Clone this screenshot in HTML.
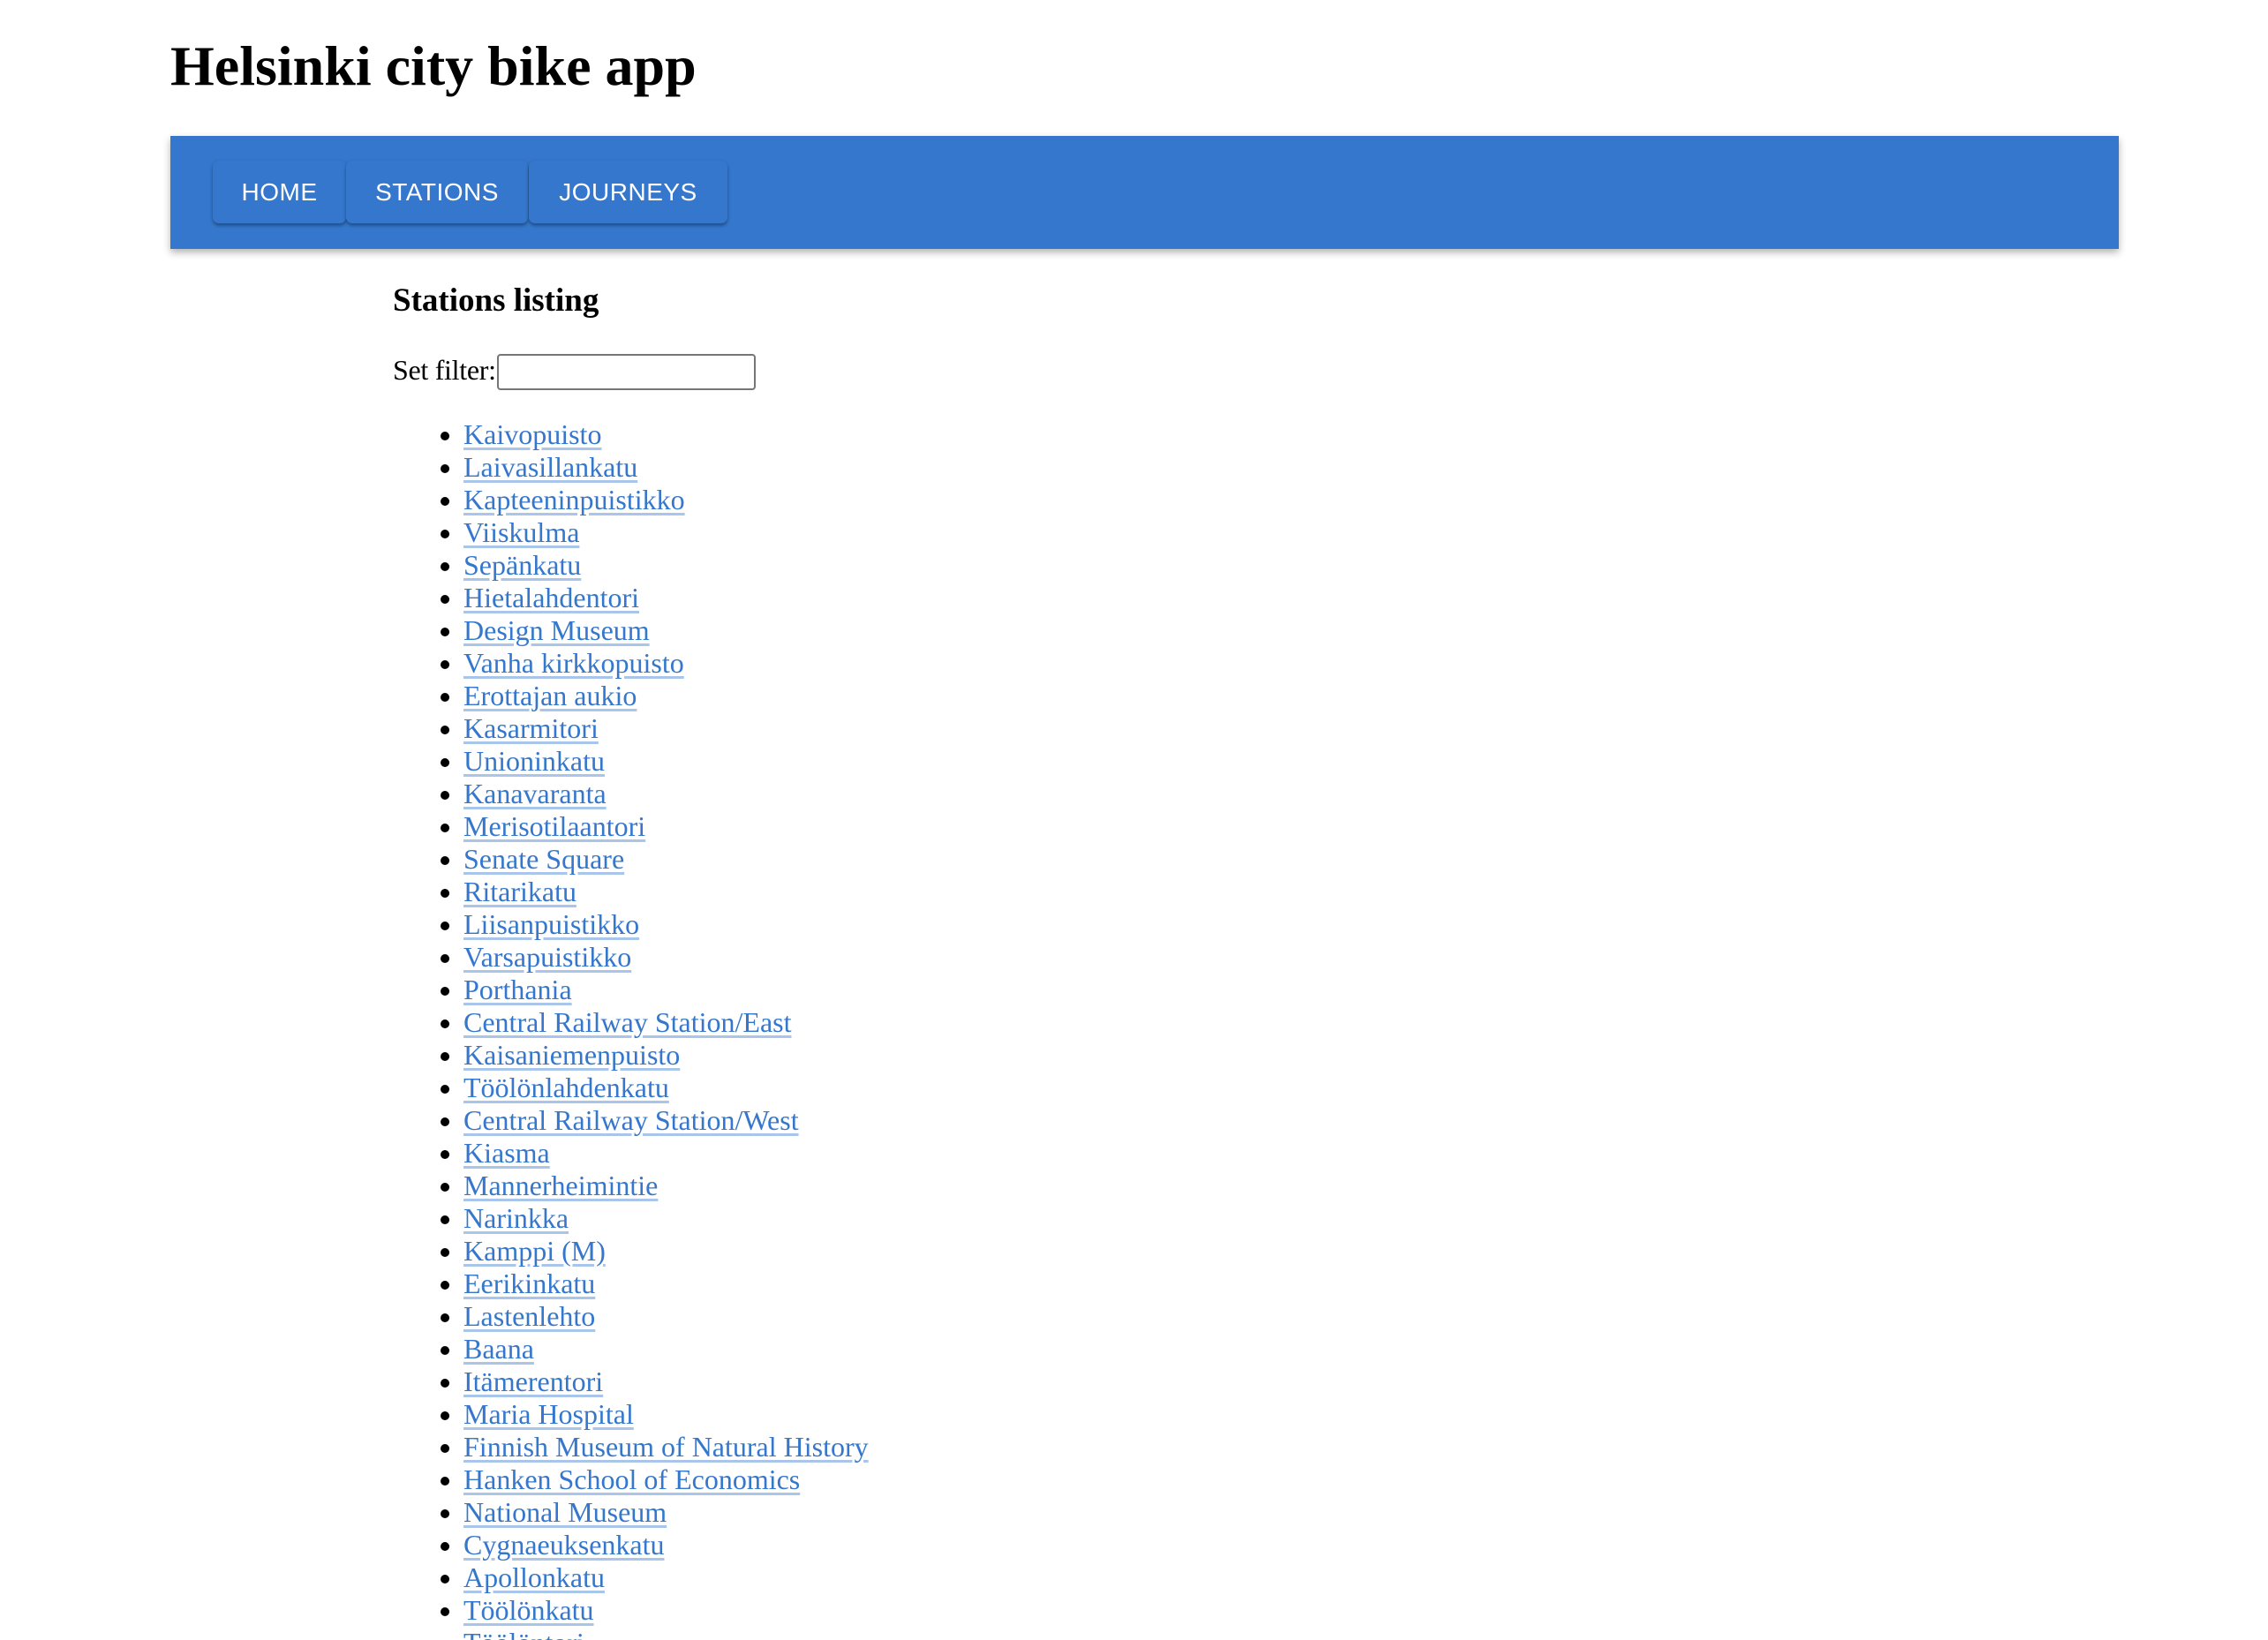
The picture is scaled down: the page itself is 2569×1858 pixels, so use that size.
<!DOCTYPE html>
<html><head><meta charset="utf-8"><style>
html,body{margin:0;padding:0;background:#fff;width:2569px;height:1858px;overflow:hidden;position:relative;font-family:"Liberation Serif",serif;}
h1{position:absolute;left:193px;top:38px;margin:0;font-size:64px;line-height:normal;font-weight:bold;color:#000;}
.nav{position:absolute;left:193px;top:154px;width:2207px;height:128px;background:#3477cc;box-shadow:0 4px 8px rgba(0,0,0,0.3);}
.btn{position:absolute;top:28px;height:71px;background:#3477cc;border-radius:7px;box-shadow:0 3px 3px rgba(0,0,0,0.25),0 1px 5px rgba(0,0,0,0.12);color:#fff;font-family:"Liberation Sans",sans-serif;font-size:28px;display:flex;align-items:center;justify-content:center;letter-spacing:0.5px;}
h3{position:absolute;left:445px;top:322px;margin:0;font-size:37px;line-height:37px;font-weight:bold;}
.filter{position:absolute;left:445px;top:399px;font-size:32px;line-height:40px;letter-spacing:-0.3px;}
.inp{position:absolute;left:563px;top:401px;width:289px;height:37px;border:2px solid #767676;border-radius:4px;background:#fff;}
ul{position:absolute;left:448px;top:473.6px;margin:0;padding:0 0 0 77px;font-size:32px;line-height:37px;}
li{margin:0;}
a{color:#3477cc;text-decoration:underline;text-decoration-color:#a9c6ea;text-decoration-thickness:3px;text-underline-offset:4px;}
</style></head><body>
<h1>Helsinki city bike app</h1>
<div class="nav">
<div class="btn" style="left:48px;width:151px;">HOME</div>
<div class="btn" style="left:199px;width:206px;">STATIONS</div>
<div class="btn" style="left:406px;width:225px;">JOURNEYS</div>
</div>
<h3>Stations listing</h3>
<div class="filter">Set filter:</div>
<div class="inp"></div>
<ul>
<li><a>Kaivopuisto</a></li>
<li><a>Laivasillankatu</a></li>
<li><a>Kapteeninpuistikko</a></li>
<li><a>Viiskulma</a></li>
<li><a>Sepänkatu</a></li>
<li><a>Hietalahdentori</a></li>
<li><a>Design Museum</a></li>
<li><a>Vanha kirkkopuisto</a></li>
<li><a>Erottajan aukio</a></li>
<li><a>Kasarmitori</a></li>
<li><a>Unioninkatu</a></li>
<li><a>Kanavaranta</a></li>
<li><a>Merisotilaantori</a></li>
<li><a>Senate Square</a></li>
<li><a>Ritarikatu</a></li>
<li><a>Liisanpuistikko</a></li>
<li><a>Varsapuistikko</a></li>
<li><a>Porthania</a></li>
<li><a>Central Railway Station/East</a></li>
<li><a>Kaisaniemenpuisto</a></li>
<li><a>Töölönlahdenkatu</a></li>
<li><a>Central Railway Station/West</a></li>
<li><a>Kiasma</a></li>
<li><a>Mannerheimintie</a></li>
<li><a>Narinkka</a></li>
<li><a>Kamppi (M)</a></li>
<li><a>Eerikinkatu</a></li>
<li><a>Lastenlehto</a></li>
<li><a>Baana</a></li>
<li><a>Itämerentori</a></li>
<li><a>Maria Hospital</a></li>
<li><a>Finnish Museum of Natural History</a></li>
<li><a>Hanken School of Economics</a></li>
<li><a>National Museum</a></li>
<li><a>Cygnaeuksenkatu</a></li>
<li><a>Apollonkatu</a></li>
<li><a>Töölönkatu</a></li>
<li><a>Töölöntori</a></li>
<li><a>Ooppera</a></li>
</ul>
</body></html>
